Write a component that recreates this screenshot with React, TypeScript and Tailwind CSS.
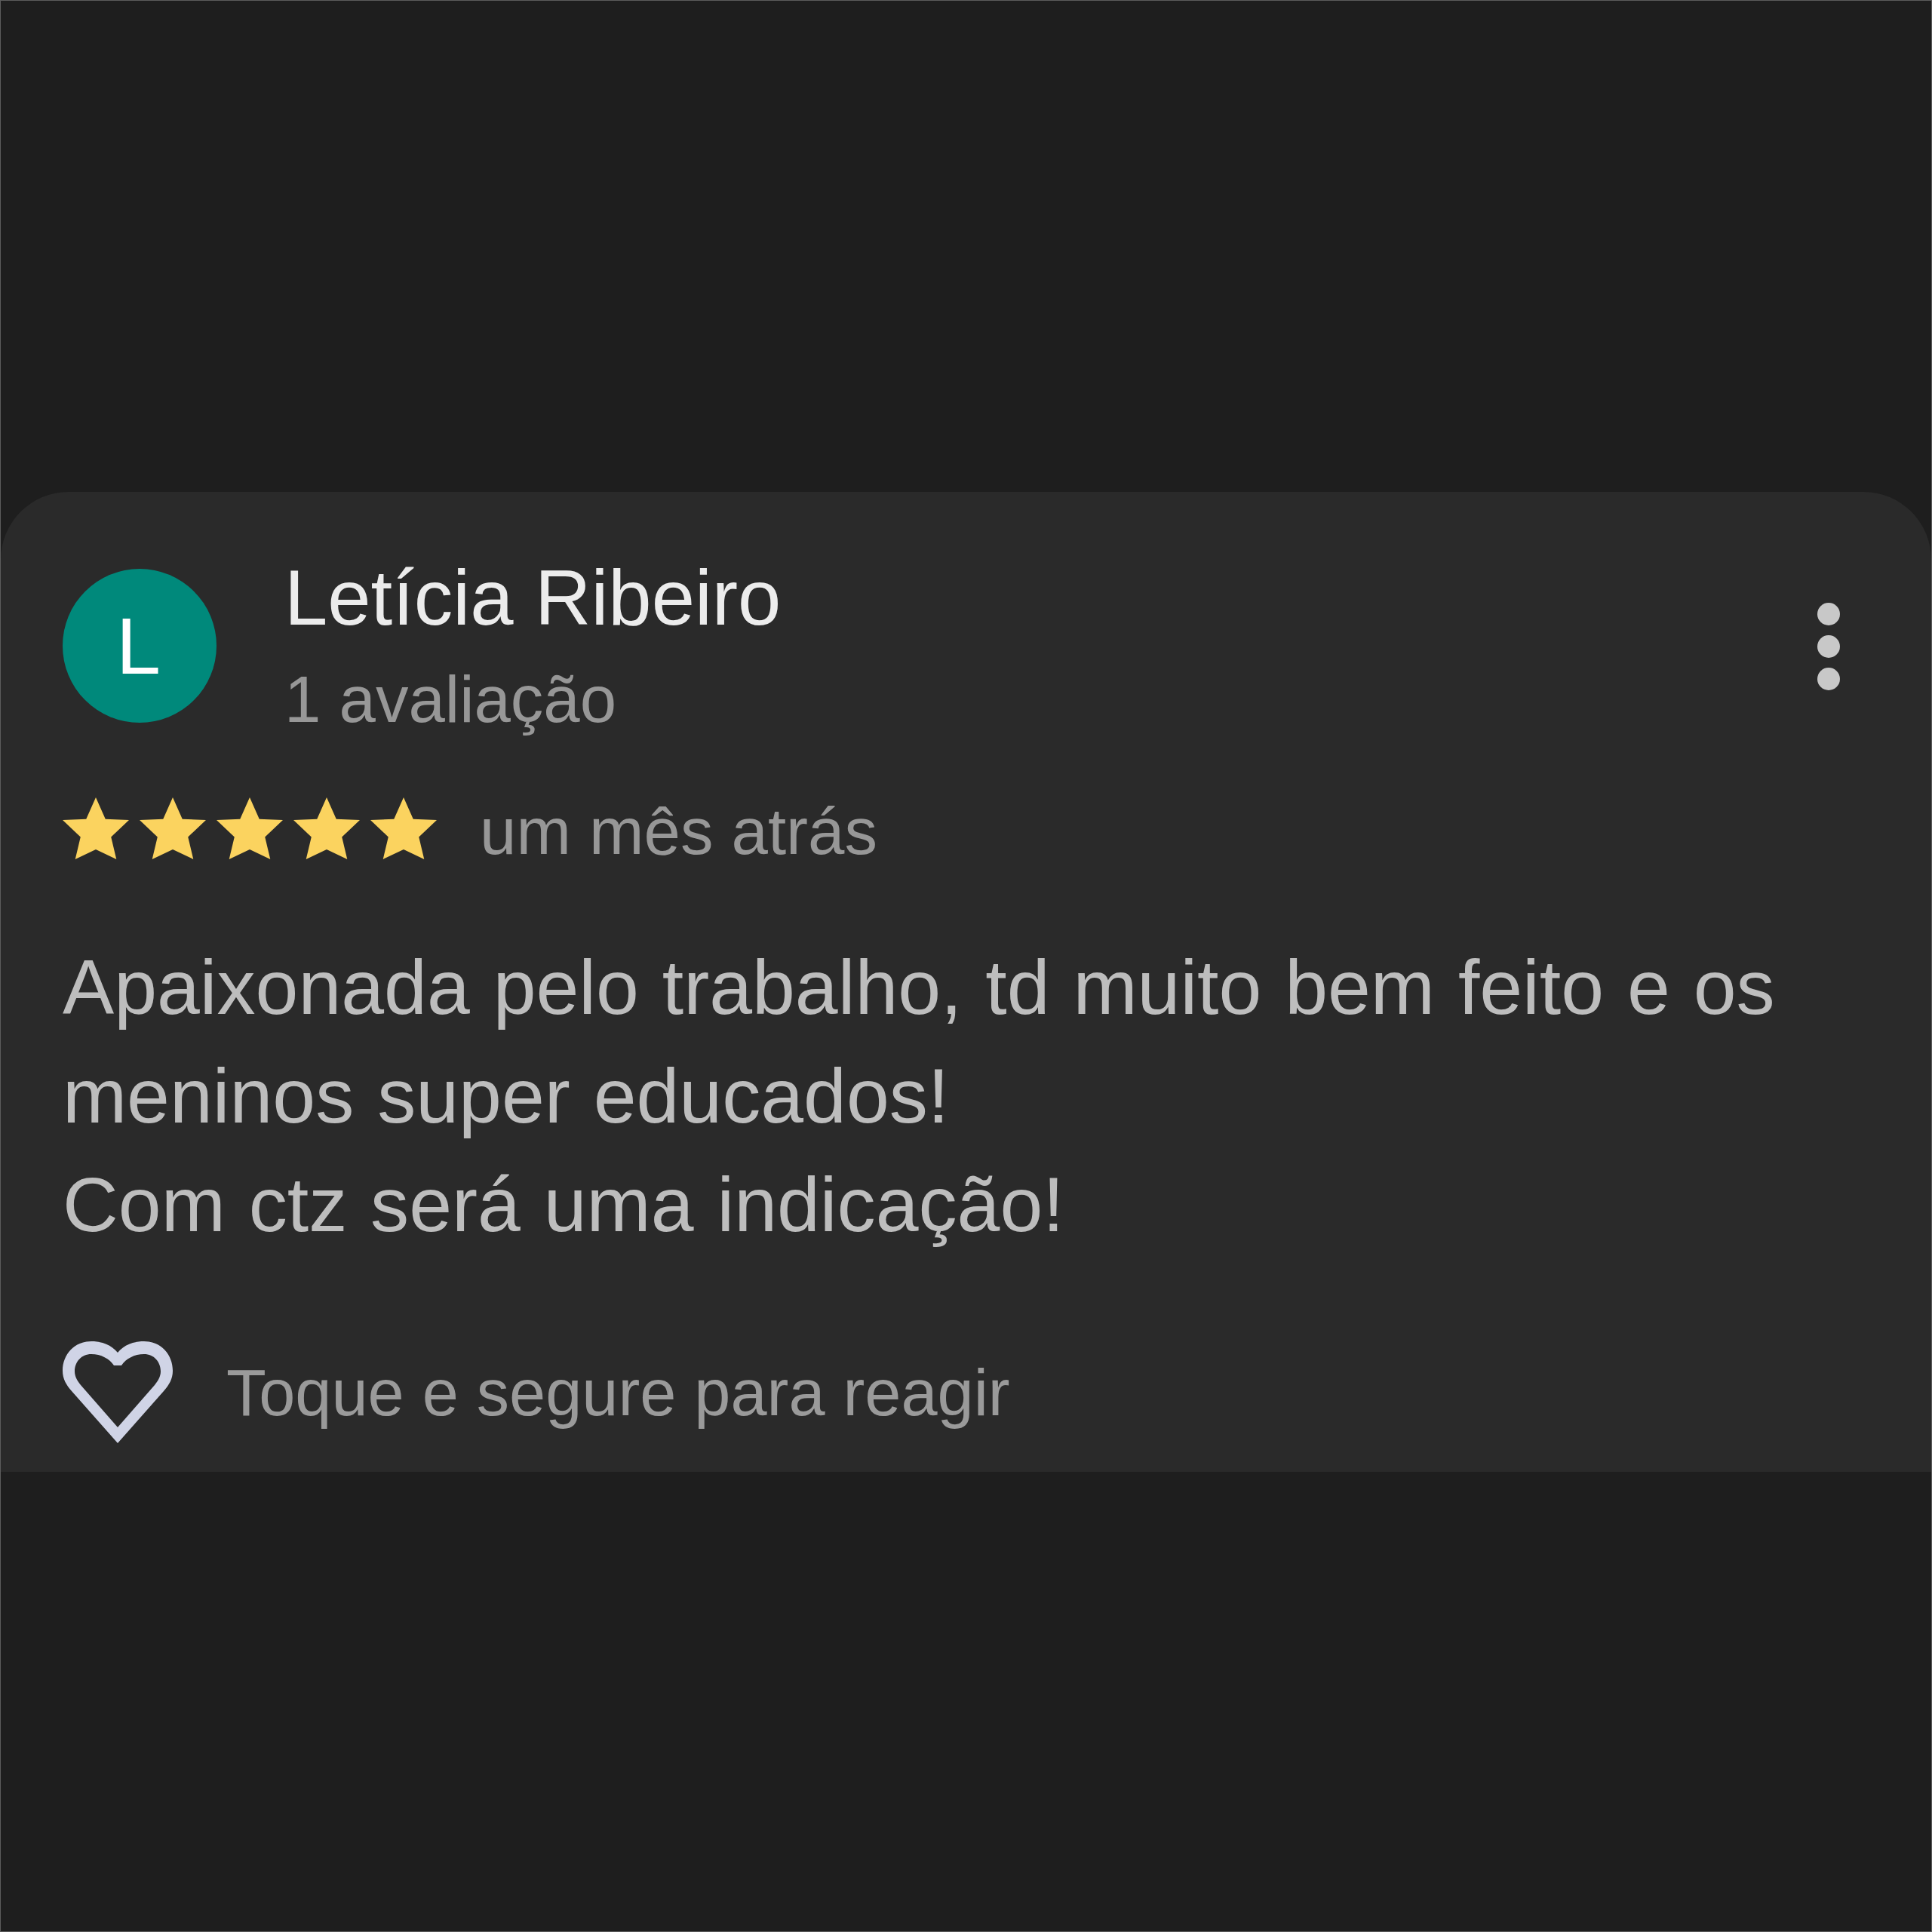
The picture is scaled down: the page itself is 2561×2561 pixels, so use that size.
import React from 'react';

function Star() {
  return (
    <svg viewBox="0 0 100 100" className="w-[88px] h-[82px]" preserveAspectRatio="none">
      <path d="M50 0 L64.5 35 L100 36.5 L73 64 L81 100 L50 84 L19 100 L27 64 L0 36.5 L35.5 35 Z" fill="#fbd35f" />
    </svg>
  );
}

export default function App() {
  return (
    <div className="w-[2561px] h-[2561px] bg-[#1e1e1e] border border-[#5c5c5c] pt-[651px] font-['Liberation_Sans',Arial,sans-serif] overflow-hidden">
      <div className="h-[1299px] bg-[#2a2a2a] rounded-t-[90px] pl-[82px] pr-[121px] pt-[90px]">
        <div className="flex items-start">
          <div className="w-[204px] h-[204px] mt-[12px] pr-[3px] rounded-full bg-[#00897b] flex items-center justify-center text-white text-[106px] leading-none">
            L
          </div>
          <div className="ml-[90px] flex-1">
            <div className="-mt-[4px] text-[103px] leading-[110px] text-[#ececec]">Letícia Ribeiro</div>
            <div className="mt-[29px] text-[87px] leading-[100px] text-[#979797]">1 avaliação</div>
          </div>
          <div className="mt-[57px] flex flex-col gap-[13px]">
            <span className="w-[30px] h-[30px] rounded-full bg-[#c8c8c8]" />
            <span className="w-[30px] h-[30px] rounded-full bg-[#c8c8c8]" />
            <span className="w-[30px] h-[30px] rounded-full bg-[#c8c8c8]" />
          </div>
        </div>
        <div className="mt-[80px] h-[82px] flex items-center">
          <div className="flex gap-[14px]">
            <Star />
            <Star />
            <Star />
            <Star />
            <Star />
          </div>
          <span className="ml-[57px] mt-[8px] text-[87px] leading-[100px] text-[#979797]">um mês atrás</span>
        </div>
        <div className="mt-[98px] text-[102.2px] leading-[144px] [word-spacing:2.5px] text-[#bdbdbd]">
          <div>Apaixonada pelo trabalho, td muito bem feito e os</div>
          <div>meninos super educados!</div>
          <div>Com ctz será uma indicação!</div>
        </div>
        <div className="mt-[109px] flex items-center">
          <svg viewBox="0 0 146 135" className="w-[146px] h-[135px]">
            <path
              fillRule="evenodd"
              d="M73 15 C81 5 94 0 108 0 C130 0 146 17 146 39 C146 50 141 58 134 66 L73 135 L12 66 C5 58 0 50 0 39 C0 17 16 0 38 0 C52 0 65 5 73 15 Z M68 32 H78 C84 23 95 17 108 17 C121 17 130 27 130 40 C130 47 126 53 122 58 L73 114 L24 58 C20 53 16 47 16 40 C16 27 25 17 38 17 C51 17 62 23 68 32 Z"
              fill="#d0d4e6"
            />
          </svg>
          <span className="ml-[71px] text-[86.5px] leading-[100px] text-[#9a9a9a]">Toque e segure para reagir</span>
        </div>
      </div>
    </div>
  );
}
